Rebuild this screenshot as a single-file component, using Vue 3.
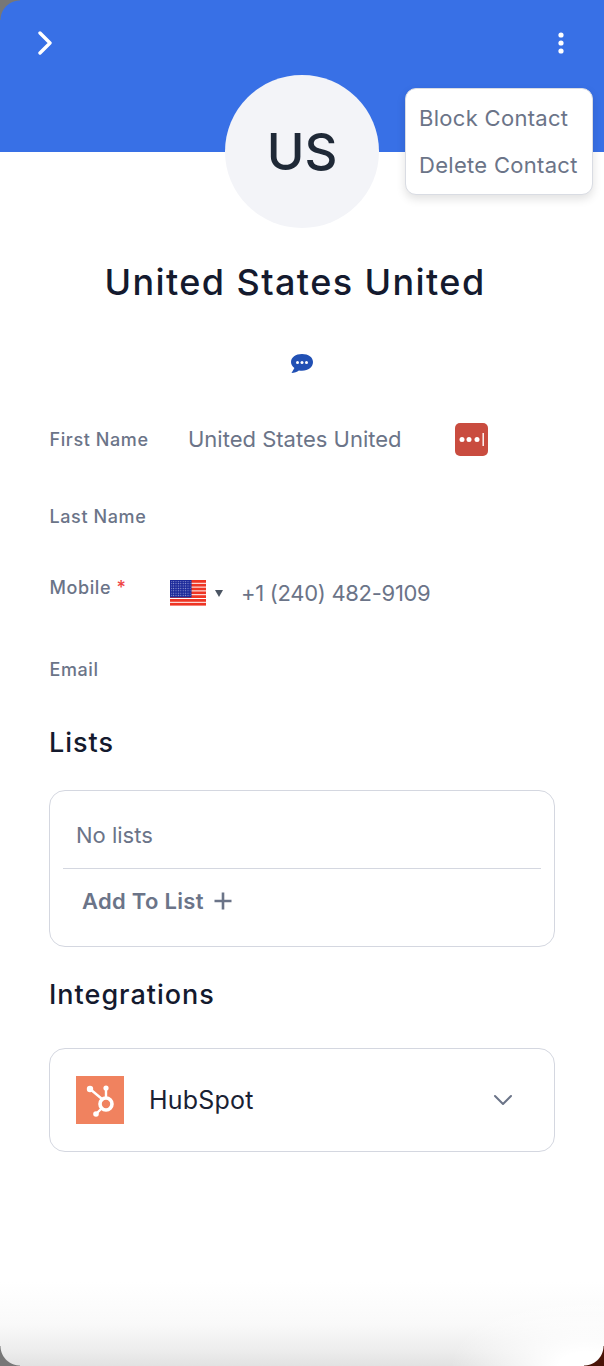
<script setup>
// Contact detail panel
const stripes = [0, 1, 2, 3, 4, 5, 6];
</script>

<template>
  <div class="panel">
    <header class="top-bar">
      <svg class="chevron" width="16" height="24" viewBox="0 0 16 24">
        <path d="M3 2l10 10-10 10" fill="none" stroke="#fff" stroke-width="3.400" stroke-linecap="round" stroke-linejoin="round" />
      </svg>
      <svg class="dots" width="6" height="24" viewBox="0 0 6 24">
        <circle cx="3" cy="4" r="2.600" fill="#fff" />
        <circle cx="3" cy="12" r="2.600" fill="#fff" />
        <circle cx="3" cy="20" r="2.600" fill="#fff" />
      </svg>
    </header>

    <div class="menu">
      <div class="menu-item">Block Contact</div>
      <div class="menu-item">Delete Contact</div>
    </div>

    <div class="avatar">US</div>
    <h1 class="name">United States United</h1>

    <div class="chat-row">
      <svg width="24" height="21" viewBox="0 0 24 21">
        <path d="M12 1C5.600 1 1 4.400 1 9c0 2.500 1.300 4.500 3.400 5.900L1.500 20c3 0 5.600-1 7.400-2.500 1 .2 2 .3 3.100 .3 6.400 0 11-3.900 11-8.800S18.400 1 12 1z" fill="#2150b4" />
        <circle cx="7.500" cy="9.500" r="1.500" fill="#fff" />
        <circle cx="12" cy="9.500" r="1.500" fill="#fff" />
        <circle cx="16.500" cy="9.500" r="1.500" fill="#fff" />
      </svg>
    </div>

    <section class="fields">
      <div class="field first">
        <span class="label">First Name</span>
        <span class="value name-value">United States United</span>
        <span class="pass-icon">
          <svg width="33" height="33" viewBox="0 0 33 33">
            <rect width="33" height="33" rx="5" fill="#c94c3f" />
            <circle cx="7" cy="16.500" r="2.500" fill="#fff" />
            <circle cx="14" cy="16.500" r="2.500" fill="#fff" />
            <circle cx="22" cy="16.500" r="2.500" fill="#fff" />
            <rect x="27.500" y="10" width="1.400" height="13" fill="#fff" />
          </svg>
        </span>
      </div>
      <div class="field last-name">
        <span class="label">Last Name</span>
      </div>
      <div class="field mobile">
        <span class="label">Mobile <i class="req">*</i></span>
        <svg class="flag" width="36" height="26" viewBox="0 0 36 26">
          <defs>
            <pattern id="stars" width="2.400" height="2.400" patternUnits="userSpaceOnUse">
              <rect width="2.400" height="2.400" fill="#1d2a9a" />
              <circle cx="1.200" cy="1.200" r="0.600" fill="#9fa6d8" />
            </pattern>
          </defs>
          <rect width="36" height="26" fill="#fff" />
          <rect v-for="s in stripes" :key="s" x="0" :y="s * 3.800" width="36" height="2.800" fill="#ee3524" />
          <rect width="21.500" height="17.500" fill="#1d2a9a" />
          <rect x="1" y="1" width="19.500" height="15.500" fill="url(#stars)" />
        </svg>
        <span class="caret"></span>
        <span class="value phone">+1 (240) 482-9109</span>
      </div>
      <div class="field email">
        <span class="label">Email</span>
      </div>
    </section>

    <h2 class="section-title lists-title">Lists</h2>
    <div class="card lists-card">
      <div class="no-lists">No lists</div>
      <div class="add-row">
        <span>Add To List</span>
        <svg width="20" height="20" viewBox="0 0 20 20">
          <path d="M10 1.500v17M1.500 10h17" stroke="#6b7488" stroke-width="2.600" fill="none" />
        </svg>
      </div>
    </div>

    <h2 class="section-title integrations-title">Integrations</h2>
    <div class="card hub-card">
      <span class="hub-logo">
        <svg width="48" height="48" viewBox="0 0 48 48">
          <rect width="48" height="48" fill="#f0825f" />
          <circle cx="30" cy="28" r="6" fill="none" stroke="#fff" stroke-width="3.600" />
          <path d="M14 13l12 10M30 13v9M25 33l-5 5" stroke="#fff" stroke-width="2.400" fill="none" />
          <circle cx="14" cy="13" r="3.200" fill="#fff" />
          <circle cx="30" cy="12" r="2.600" fill="#fff" />
          <circle cx="20" cy="38" r="2.800" fill="#fff" />
        </svg>
      </span>
      <span class="hub-name">HubSpot</span>
      <svg class="hub-chevron" width="20" height="12" viewBox="0 0 20 12">
        <path d="M2 2l8 8 8-8" fill="none" stroke="#6b7488" stroke-width="2" stroke-linecap="round" stroke-linejoin="round" />
      </svg>
    </div>

    <div class="bottom-fade"></div>
    <span class="corner tl"></span>
    <span class="corner bl"></span>
    <span class="corner br"></span>
  </div>
</template>

<style>
html, body { margin: 0; background: #fff; }
</style>

<style scoped>
.panel {
  position: relative;
  width: 604px;
  height: 1366px;
  overflow: hidden;
  background: #fff;
  font-family: "Inter", "Noto Sans", sans-serif;
  box-sizing: border-box;
}
.top-bar {
  height: 152px;
  background: #3870e6;
  display: flex;
  justify-content: space-between;
  align-items: flex-start;
  padding: 31px 40px 0 37px;
  box-sizing: border-box;
}
.menu {
  position: absolute;
  left: 405px;
  top: 88px;
  width: 188px;
  height: 107px;
  box-sizing: border-box;
  padding: 6px 0 0 13px;
  background: #fff;
  border-radius: 11px;
  border: 1px solid #d9dce3;
  box-shadow: 0 4px 10px rgba(0, 0, 0, 0.12);
}
.menu-item {
  font-size: 22px;
  line-height: 47px;
  color: #6b7488;
  letter-spacing: 0.3px;
}
.avatar {
  width: 154px;
  height: 153px;
  margin: -77px auto 0;
  position: relative;
  border-radius: 50%;
  background: #f3f4f8;
  color: #1f2937;
  font-size: 51px;
  font-weight: 500;
  display: flex;
  align-items: center;
  justify-content: center;
}
.name {
  margin: 31px 0 0;
  padding-right: 14px;
  text-align: center;
  font-size: 36px;
  font-weight: 500;
  line-height: 46px;
  letter-spacing: 1.400px;
  color: #141a2e;
}
.chat-row {
  margin-top: 48px;
  display: flex;
  justify-content: center;
  height: 22px;
}
.fields {
  margin-top: 44px;
  padding-left: 49.500px;
}
.field {
  display: flex;
  align-items: center;
  height: 40px;
}
.label {
  font-size: 18px;
  font-weight: 500;
  color: #6b7488;
  letter-spacing: 0.600px;
  width: 138.500px;
  flex: none;
  position: relative;
}
.value {
  font-size: 22px;
  color: #6b7488;
}
.phone {
  letter-spacing: -0.300px;
  margin-left: -1px;
}
.name-value {
  width: 267px;
}
.pass-icon {
  display: flex;
}
.last-name { margin-top: 37px; }
.mobile { margin-top: 37px; }
.mobile .label { width: 120.500px; top: -6px; }
.email { margin-top: 36px; }
.req {
  color: #ef4444;
  font-style: normal;
}
.caret {
  width: 0;
  height: 0;
  margin: 0 19px 0 9px;
  border-left: 4.500px solid transparent;
  border-right: 4.500px solid transparent;
  border-top: 7px solid #4b5563;
}
.section-title {
  margin: 0;
  padding-left: 49px;
  font-size: 27px;
  font-weight: 500;
  line-height: 36px;
  letter-spacing: 1px;
  color: #141a2e;
}
.lists-title { margin-top: 36px; }
.card {
  margin: 0 49px;
  border: 1px solid #d4d7e0;
  border-radius: 16px;
  box-sizing: border-box;
}
.lists-card {
  margin-top: 29px;
  height: 157px;
  padding: 0 13px;
}
.no-lists {
  height: 78px;
  padding: 11px 0 0 13px;
  box-sizing: border-box;
  display: flex;
  align-items: center;
  font-size: 22px;
  color: #6b7488;
  border-bottom: 1px solid #d4d7e0;
}
.add-row {
  display: flex;
  align-items: center;
  gap: 9px;
  height: 63px;
  padding-left: 19px;
  font-size: 22px;
  font-weight: 600;
  letter-spacing: 0.300px;
  color: #6b7488;
}
.integrations-title { margin-top: 30px; }
.hub-card {
  margin-top: 35px;
  height: 104px;
  padding: 0 41px 0 26px;
  display: flex;
  align-items: center;
}
.hub-logo { display: flex; }
.hub-name {
  margin-left: 25px;
  font-size: 25px;
  letter-spacing: 0.200px;
  color: #1a2133;
}
.hub-chevron { margin-left: auto; }
.bottom-fade {
  position: absolute;
  left: 0;
  right: 0;
  bottom: 0;
  height: 84px;
  background:
    radial-gradient(ellipse 135px 70px at 97% 100%, #fff 20%, rgba(255, 255, 255, 0) 100%),
    linear-gradient(to bottom, rgba(226, 226, 226, 0), rgba(226, 226, 226, 0.2) 50%, rgba(226, 226, 226, 0.6) 80%, #e2e2e2);
}
.corner {
  position: absolute;
  width: 20px;
  height: 20px;
}
.tl { left: 0; top: 0; background: radial-gradient(circle at 100% 100%, transparent 19px, #777 20px); }
.bl { left: 0; bottom: 0; background: radial-gradient(circle at 100% 0, transparent 19px, #777 20px); }
.br { right: 0; bottom: 0; background: radial-gradient(circle at 0 0, transparent 19px, #4a1408 20px); }
</style>
